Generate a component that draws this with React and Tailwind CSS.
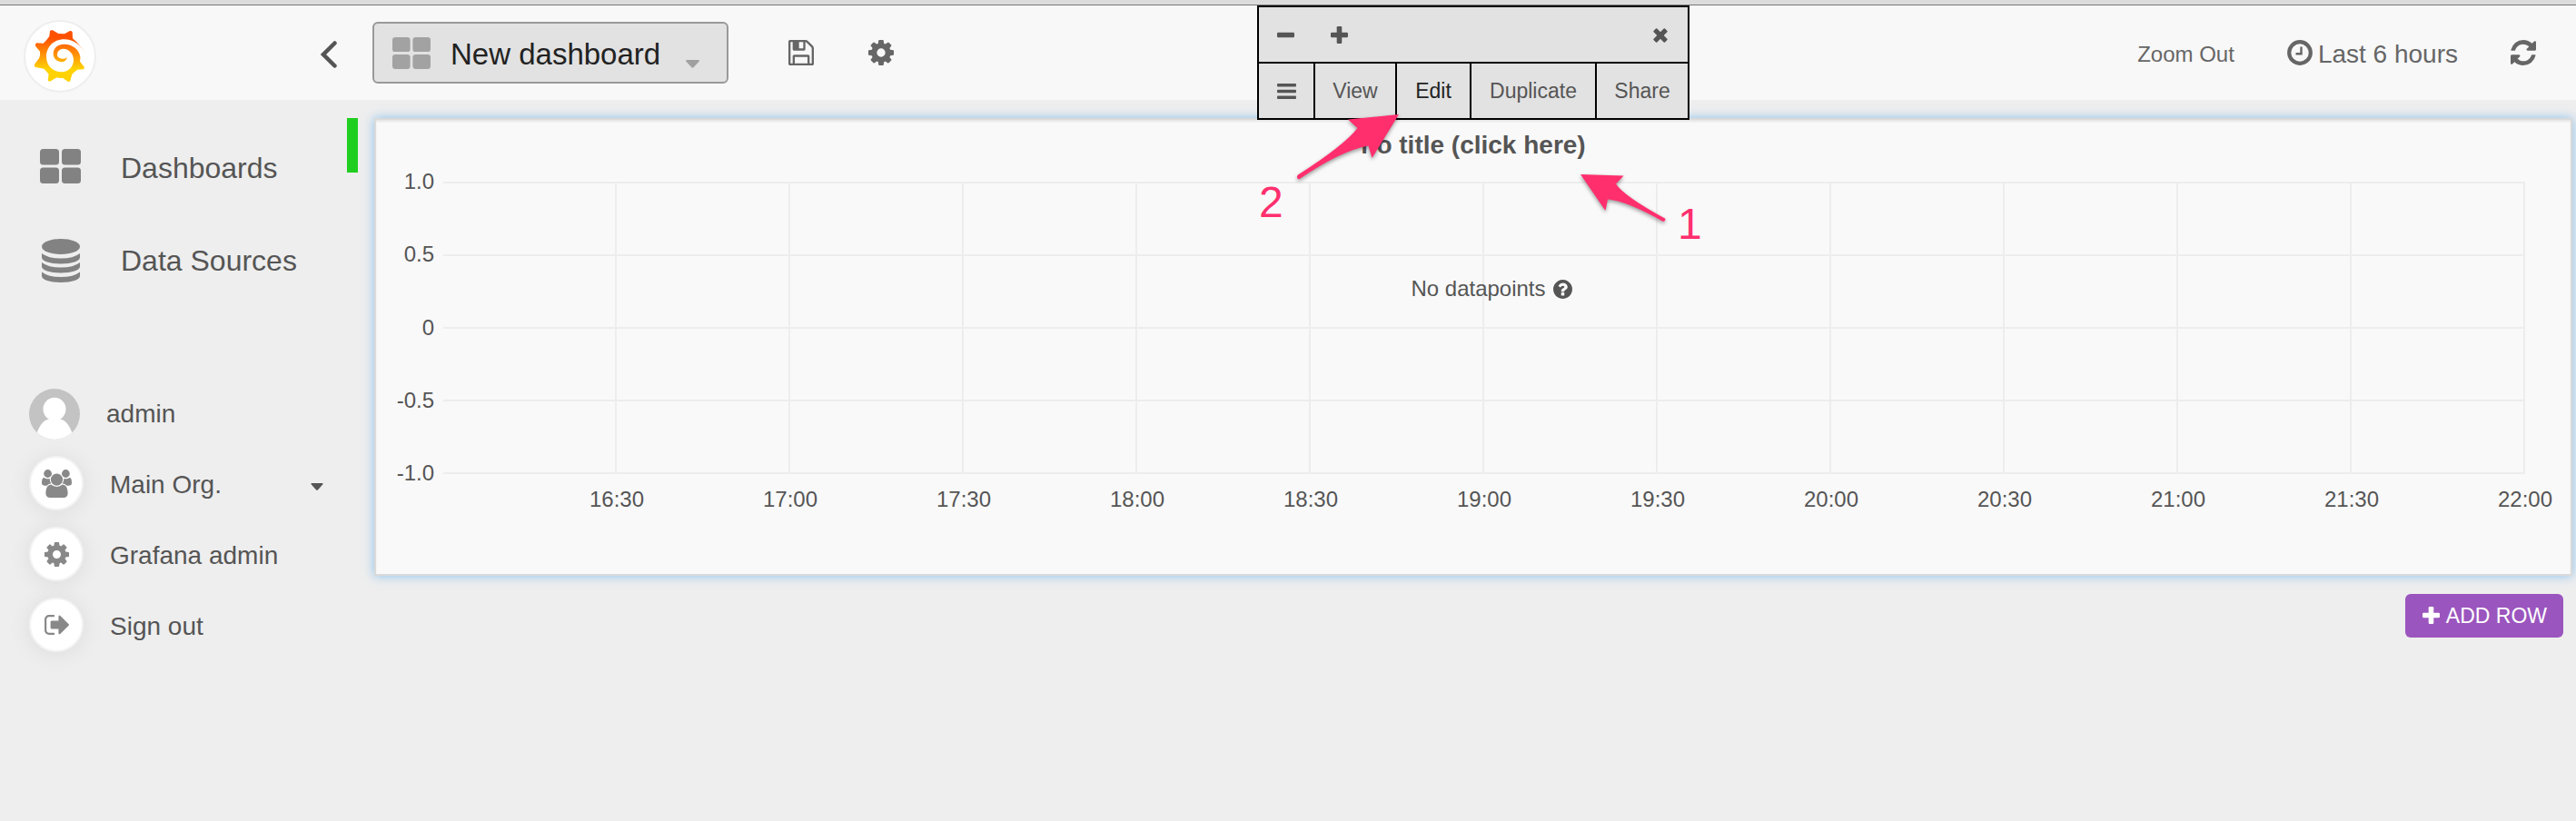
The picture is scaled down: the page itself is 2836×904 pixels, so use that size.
import React from "react";

const hours = ["16:30", "17:00", "17:30", "18:00", "18:30", "19:00", "19:30", "20:00", "20:30", "21:00", "21:30", "22:00"];
const levels = ["1.0", "0.5", "0", "-0.5", "-1.0"];
const cells = Array.from({ length: 48 }, (_, i) => i);

const COG =
  "M1152 896q0-106-75-181t-181-75-181 75-75 181 75 181 181 75 181-75 75-181zm512-109v222q0 12-8 23t-20 13l-185 28q-19 54-39 91 35 50 107 138 10 12 10 25t-9 23q-27 37-99 108t-94 71q-12 0-26-9l-138-108q-44 23-91 38-16 136-29 186-7 28-36 28h-222q-14 0-24.500-8.500t-11.500-21.500l-28-184q-49-16-90-37l-141 107q-10 9-25 9-14 0-25-11-126-114-165-168-7-10-7-23 0-12 8-23 15-21 51-66.500t54-70.500q-27-50-41-99l-183-27q-13-2-21-12.500t-8-23.500v-222q0-12 8-23t19-13l186-28q14-46 39-92-40-57-107-138-10-12-10-24 0-10 9-23 26-36 98.500-107.500t94.500-71.500q13 0 26 10l138 107q44-23 91-38 16-136 29-186 7-28 36-28h222q14 0 24.500 8.500t11.500 21.500l28 184q49 16 90 37l142-107q9-9 24-9 13 0 25 10 129 119 165 170 7 8 7 22 0 12-8 23-15 21-51 66.500t-54 70.500q26 50 41 98l183 28q13 2 21 12.500t8 23.500z";
const SAVE =
  "M384 1536h768v-384H384v384zm896 0h128V640q0-14-10-38.500t-20-34.500l-281-281q-10-10-34-20t-39-10v416q0 40-28 68t-68 28H352q-40 0-68-28t-28-68V256H128v1280h128v-416q0-40 28-68t68-28h832q40 0 68 28t28 68v416zM896 608V288q0-13-9.500-22.500T864 256H672q-13 0-22.500 9.500T640 288v320q0 13 9.500 22.500T672 640h192q13 0 22.500-9.500T896 608zm640 32v928q0 40-28 68t-68 28H96q-40 0-68-28t-28-68V224q0-40 28-68t68-28h928q40 0 88 20t76 48l280 280q28 28 48 76t20 88z";
const REFRESH =
  "M1639 1056q0 5-1 7-64 268-268 434.500t-478 166.500q-146 0-282.500-55t-243.500-157l-129 129q-19 19-45 19t-45-19-19-45v-448q0-26 19-45t45-19h448q26 0 45 19t19 45-19 45l-137 137q71 66 161 102t187 36q134 0 250-65t186-179q11-17 53-117 8-23 30-23h192q13 0 22.500 9.500t9.500 22.500zm25-800v448q0 26-19 45t-45 19h-448q-26 0-45-19t-19-45 19-45l138-138q-148-137-349-137-134 0-250 65t-186 179q-11 17-53 117-8 23-30 23h-199q-13 0-22.500-9.500t-9.500-22.500v-7q65-268 270-434.500t480-166.500q146 0 284 55.500t245 156.500l130-129q19-19 45-19t45 19 19 45z";
const USERS =
  "M593 896q-162 5-265 128h-134q-82 0-138-40.500t-56-118.500q0-353 124-353 6 0 43.500 21t97.500 42.500 119 21.500q67 0 133-23-5 37-5 66 0 139 81 256zm1071 637q0 120-73 189.500t-194 69.500h-874q-121 0-194-69.500t-73-189.500q0-53 3.500-103.500t14-109 26.500-108.500 43-97.500 62-81 85.500-53.500 111.500-20q10 0 43 21.500t73 48 107 48 135 21.500 135-21.500 107-48 73-48 43-21.500q61 0 111.500 20t85.500 53.500 62 81 43 97.500 26.500 108.500 14 109 3.500 103.500zm-1024-1277q0 106-75 181t-181 75-181-75-75-181 75-181 181-75 181 75 75 181zm704 384q0 159-112.500 271.500t-271.500 112.500-271.500-112.500-112.500-271.500 112.500-271.500 271.500-112.500 271.500 112.500 112.500 271.500zm576 225q0 78-56 118.500t-138 40.500h-134q-103-123-265-128 81-117 81-256 0-29-5-66 66 23 133 23 59 0 119-21.500t97.500-42.500 43.500-21q124 0 124 353zm-128-609q0 106-75 181t-181 75-181-75-75-181 75-181 181-75 181 75 75 181z";
const SIGN_OUT =
  "M704 1440q0 4 1 20t.5 26.500-3 23.500-10 19.500-20.500 6.500h-320q-119 0-203.500-84.500t-84.500-203.500v-704q0-119 84.500-203.500t203.500-84.500h320q13 0 22.500 9.500t9.500 22.500q0 4 1 20t.5 26.500-3 23.500-10 19.500-20.500 6.500h-320q-66 0-113 47t-47 113v704q0 66 47 113t113 47h312l11.500 1 11.500 3 8 5.500 7 9 2 13.500zm928-544q0 26-19 45l-544 544q-19 19-45 19t-45-19-19-45v-288h-448q-26 0-45-19t-19-45v-384q0-26 19-45t45-19h448v-288q0-26 19-45t45-19 45 19l544 544q19 19 19 45z";
const QUESTION =
  "M1024 1376v-192q0-14-9-23t-23-9h-192q-14 0-23 9t-9 23v192q0 14 9 23t23 9h192q14 0 23-9t9-23zm256-672q0-88-55.500-163t-138.500-116-170-41q-243 0-371 213-15 24 8 42l132 100q7 6 19 6 16 0 25-12 53-68 86-92 34-24 86-24 48 0 85.500 26t37.500 59q0 38-20 61t-68 45q-63 28-115.500 86.500t-52.500 125.500v36q0 14 9 23t23 9h192q14 0 23-9t9-23q0-19 21.500-49.500t54.500-49.500q32-18 49-28.500t46-35 44.500-48 28-60.500 12.500-81zm384 192q0 209-103 385.500t-279.500 279.500-385.500 103-385.500-103-279.500-279.500-103-385.500 103-385.500 279.500-279.500 385.500-103 385.500 103 279.500 279.500 103 385.500z";

function Glyph({ d, box = "128 128 1536 1536", className }) {
  return (
    <svg viewBox={box} className={className} fill="currentColor" aria-hidden="true">
      <path d={d} />
    </svg>
  );
}

function Plus({ className }) {
  return (
    <svg viewBox="0 0 19 19" className={className} fill="currentColor" aria-hidden="true">
      <rect x="0" y="6.700" width="19" height="5.600" rx="1.200" />
      <rect x="6.700" y="0" width="5.600" height="19" rx="1.200" />
    </svg>
  );
}

function Caret({ className }) {
  return (
    <svg viewBox="0 0 15 9" className={className} fill="currentColor" aria-hidden="true">
      <path d="M1 0H14Q15.500 .5 14.500 1.700L8.500 8.300Q7.500 9 6.500 8.300L.5 1.700Q-.5 .5 1 0Z" />
    </svg>
  );
}

function Logo() {
  return (
    <svg viewBox="110 96 176 180" className="h-15 w-15" aria-hidden="true">
      <defs>
        <linearGradient id="sun" x1="0" y1="100" x2="0" y2="270" gradientUnits="userSpaceOnUse">
          <stop offset="0.150" stopColor="#ff5000" />
          <stop offset="0.500" stopColor="#ff9708" />
          <stop offset="0.750" stopColor="#ffd200" />
        </linearGradient>
      </defs>
      <path
        fill="url(#sun)"
        d="M281 176Q262 145 240 127L239 106Q236 101 231 102L213 112Q203 111 193 111L174 100Q167 98 165 103L163 120Q156 131 143 143L120 142Q116 146 117 152L132 170Q134 185 129 193L114 212Q112 220 117 222L145 227Q154 236 161 245L158 265Q161 271 167 268L188 256Q198 259 207 257L224 269Q230 272 232 266L238 245Q246 236 256 230L275 229Q281 226 278 221L264 203Q266 194 265 184Z"
      />
      <path
        fill="#fff"
        d="M283 178Q255 130 212 130C175 130 153 158 153 187C153 218 175 238 203 238C228 238 243 218 243 198C243 178 228 161 209 161C197 161 189 170 189 180C189 190 198 194 206 194Q216 195 222 190Q218 204 205 205C186 204 176 192 176 178C176 158 192 146 212 146C240 146 262 165 265 187Z"
      />
    </svg>
  );
}

function Tiles({ className }) {
  return (
    <svg viewBox="0 0 45 38" preserveAspectRatio="none" className={className} fill="currentColor" aria-hidden="true">
      <rect width="21" height="17.500" rx="3.500" />
      <rect x="24" width="21" height="17.500" rx="3.500" />
      <rect y="20.500" width="21" height="17.500" rx="3.500" />
      <rect x="24" y="20.500" width="21" height="17.500" rx="3.500" />
    </svg>
  );
}

function Database() {
  return (
    <svg viewBox="0 0 42 48" className="h-12 w-[42px]" fill="currentColor" aria-hidden="true">
      <ellipse cx="21" cy="8.500" rx="21" ry="8.500" />
      <path d="M0 16Q7 21.500 21 21.500T42 16V20.500C42 24.500 33 27.500 21 27.500S0 24.500 0 20.500Z" />
      <path d="M0 26Q7 31.500 21 31.500T42 26V30.500C42 34.500 33 37.500 21 37.500S0 34.500 0 30.500Z" />
      <path d="M0 36.500Q7 42 21 42T42 36.500V41C42 45 33 48 21 48S0 45 0 41Z" />
    </svg>
  );
}

function Avatar() {
  return (
    <svg viewBox="0 0 56 56" className="h-14 w-14" aria-hidden="true">
      <defs>
        <clipPath id="face">
          <circle cx="28" cy="28" r="28" />
        </clipPath>
      </defs>
      <g clipPath="url(#face)">
        <rect width="56" height="56" fill="#c3c3c3" />
        <ellipse cx="28" cy="22.500" rx="12.500" ry="12.800" fill="#fff" />
        <path d="M8 50C12 39 17 34 22 33.500H34C39 34 44 39 48 50V56H8Z" fill="#fff" />
      </g>
    </svg>
  );
}

function Badge({ children }) {
  return (
    <span className="mb-1 flex h-15 w-15 items-center justify-center rounded-full border-2 border-[#f3f3f3] bg-white text-[#888] shadow-[0_2px_24px_rgba(0,0,0,0.08)]">
      {children}
    </span>
  );
}

function Header() {
  return (
    <header className="flex h-[104px] items-center bg-[#f8f8f8] text-[#666]">
      <div className="flex w-[410px] shrink-0 items-center justify-between pr-[39px] pl-[26px]">
        <a href="#home" aria-label="Home" className="mt-2 flex h-20 w-20 items-center justify-center rounded-full border-2 border-[#eee] bg-white">
          <Logo />
        </a>
        <button type="button" aria-label="Collapse menu" className="mt-1 text-[#555]">
          <svg viewBox="0 0 18 30" className="h-[30px] w-[18px]" fill="none" stroke="currentColor" strokeWidth="4.500" strokeLinecap="round" aria-hidden="true">
            <path d="M15.500 2.500L3 15L15.500 27.500" />
          </svg>
        </button>
      </div>
      <button type="button" className="flex h-[68px] shrink-0 items-center rounded-md border-2 border-[#999] bg-[#e2e2e2] pr-[30px] pl-5 text-[33px] leading-10 text-[#222]">
        <Tiles className="h-[35px] w-[42px] text-[#a2a2a2]" />
        <span className="mt-1 ml-[22px] whitespace-nowrap">New dashboard</span>
        <Caret className="mt-6 ml-7 h-[9px] w-[15px] text-[#a0a0a0]" />
      </button>
      <button type="button" aria-label="Save dashboard" className="ml-[66px]">
        <Glyph d={SAVE} box="0 128 1536 1536" className="h-7 w-7" />
      </button>
      <button type="button" aria-label="Dashboard settings" className="ml-15">
        <Glyph d={COG} className="h-7 w-7" />
      </button>
      <div className="ml-auto flex items-center pr-11">
        <button type="button" className="mt-1 text-2xl leading-8">Zoom Out</button>
        <button type="button" className="ml-[58px] flex items-center gap-1.5 text-[28px] leading-8">
          <svg viewBox="0 0 28 28" className="h-7 w-7" fill="none" stroke="currentColor" aria-hidden="true">
            <circle cx="14" cy="14" r="11.800" strokeWidth="4.200" />
            <path d="M15.500 7.500V15.300H9.500" strokeWidth="2.400" />
          </svg>
          <span className="mt-1">Last 6 hours</span>
        </button>
        <button type="button" aria-label="Refresh" className="ml-[58px]">
          <Glyph d={REFRESH} className="h-7 w-7" />
        </button>
      </div>
    </header>
  );
}

function Sidebar() {
  return (
    <nav className="w-[382px] shrink-0 pt-6 text-[28px] leading-9 text-[#555]">
      <ul className="text-[32px]">
        <li>
          <a href="#dashboards" className="flex h-[102px] items-center pl-11">
            <Tiles className="mb-1 h-[38px] w-[45px] text-[#828282]" />
            <span className="ml-11">Dashboards</span>
          </a>
        </li>
        <li>
          <a href="#datasources" className="flex h-[102px] items-center pl-[46px]">
            <span className="text-[#828282]"><Database /></span>
            <span className="ml-[45px]">Data Sources</span>
          </a>
        </li>
      </ul>
      <ul className="mt-[79px]">
        <li>
          <a href="#profile" className="flex h-[78px] items-center gap-[29px] pl-8">
            <Avatar />
            admin
          </a>
        </li>
        <li>
          <button type="button" className="flex h-[78px] w-full items-center gap-[29px] pr-[26px] pl-8">
            <Badge><Glyph d={USERS} box="0 0 1920 1792" className="h-[31px] w-[33px]" /></Badge>
            Main Org.
            <Caret className="mt-1 ml-auto h-2 w-[14px]" />
          </button>
        </li>
        <li>
          <a href="#admin" className="flex h-[78px] items-center gap-[29px] pl-8">
            <Badge><Glyph d={COG} className="h-[27px] w-[27px]" /></Badge>
            Grafana admin
          </a>
        </li>
        <li>
          <a href="#logout" className="flex h-[78px] items-center gap-[29px] pl-8">
            <Badge><Glyph d={SIGN_OUT} box="64 256 1568 1280" className="h-[22px] w-[27px]" /></Badge>
            Sign out
          </a>
        </li>
      </ul>
    </nav>
  );
}

function PanelMenu() {
  return (
    <div className="absolute bottom-full left-1/2 w-[476px] -translate-x-1/2 border-2 border-black bg-[#e2e2e2] text-[23px] leading-8 text-[#555]">
      <div className="flex h-[62px] items-center border-b-2 border-black pr-[21px] pl-5">
        <button type="button" aria-label="Narrower">
          <svg viewBox="0 0 19 19" className="h-[19px] w-[19px]" fill="currentColor" aria-hidden="true">
            <rect y="6.700" width="19" height="5.600" rx="1.200" />
          </svg>
        </button>
        <button type="button" aria-label="Wider" className="ml-10"><Plus className="h-[19px] w-[19px]" /></button>
        <button type="button" aria-label="Close" className="mt-0.5 ml-auto"><Plus className="h-[18px] w-[18px] rotate-45" /></button>
      </div>
      <div className="flex h-[60px] divide-x-2 divide-black">
        <button type="button" aria-label="Panel menu" className="w-[62px] shrink-0 pl-5">
          <svg viewBox="0 0 21 17" className="h-[17px] w-[21px]" fill="currentColor" aria-hidden="true">
            <rect width="21" height="3.400" rx="1" />
            <rect y="6.800" width="21" height="3.400" rx="1" />
            <rect y="13.600" width="21" height="3.400" rx="1" />
          </svg>
        </button>
        <button type="button" className="w-[90px] shrink-0">View</button>
        <button type="button" className="w-[82px] shrink-0 text-[#222]">Edit</button>
        <button type="button" className="w-[138px] shrink-0">Duplicate</button>
        <button type="button" className="flex-1">Share</button>
      </div>
    </div>
  );
}

function Annotations() {
  return (
    <svg viewBox="1382 120 500 150" className="pointer-events-none absolute -top-3 left-1/2 -ml-[240px] h-[150px] w-[500px] overflow-visible" fill="#ff2f6e">
      <g className="drop-shadow-[0_2px_2px_rgba(0,0,0,0.4)]">
        <path d="M1540 126L1484 131.500L1494.500 141Q1480 160 1429 192.500Q1426.500 196 1430 197.500Q1476 166 1506.500 160.500L1510.500 174Z" />
        <path d="M1740 192L1787.500 193.500L1779 202.500Q1788 216 1833 240.500Q1834.500 243.500 1831 244Q1790 221 1770 219.500L1767.500 232Z" />
      </g>
      <g fontFamily="Liberation Sans, Arial, sans-serif" fontSize="48">
        <text x="1386" y="239">2</text>
        <text x="1847" y="263">1</text>
      </g>
    </svg>
  );
}

function Graph() {
  return (
    <div className="mt-6 flex gap-2.5 pr-[50px] text-2xl leading-6 text-[#555]">
      <ul className="-mt-3 flex h-[345px] w-16 shrink-0 flex-col justify-between text-right">
        {levels.map((v) => (
          <li key={v}>{v}</li>
        ))}
      </ul>
      <div className="relative flex-1">
        <div className="grid grid-cols-12 border-b-2 border-[#ededed]">
          {cells.map((c) => (
            <div key={c} className="h-20 border-t-2 border-r-2 border-[#ededed]" />
          ))}
        </div>
        <ul className="mt-4 grid grid-cols-12">
          {hours.map((h) => (
            <li key={h} className="flex justify-end">
              <span className="-mr-8 w-16 text-center">{h}</span>
            </li>
          ))}
        </ul>
        <p className="absolute inset-x-0 top-[106px] flex items-center justify-center gap-2 pl-4">
          No datapoints
          <Glyph d={QUESTION} className="h-[21px] w-[21px]" />
        </p>
      </div>
    </div>
  );
}

export default function App() {
  return (
    <div className="flex min-h-screen flex-col bg-[#eee] font-['Liberation_Sans',Arial,sans-serif]">
      <div className="h-1.5 border-b border-[#777] bg-[#dcdcdc]" />
      <Header />
      <div className="flex flex-1">
        <Sidebar />
        <main className="flex min-w-0 flex-1 pt-5 pr-1">
          <button type="button" aria-label="Row menu" className="h-15 w-3 shrink-0 bg-[#20ce20]" />
          <div className="ml-[18px] flex min-w-0 flex-1 flex-col">
            <section className="relative border-2 border-[#dadada] bg-[#f9f9f9] pt-3 pb-[70px] shadow-[inset_0_2px_2px_rgba(0,0,0,0.075),0_0_11px_rgba(82,168,236,0.65)]">
              <h2 className="text-center text-[28px] leading-8 font-bold text-[#555]">
                <button type="button">no title (click here)</button>
              </h2>
              <Graph />
              <PanelMenu />
              <Annotations />
            </section>
            <button type="button" className="mt-5 mr-2.5 flex h-12 items-center gap-[7px] self-end rounded-md bg-[#9b55be] pr-[18px] pl-[19px] text-[23px] leading-8 text-white">
              <Plus className="mb-0.5 h-[19px] w-[19px]" />
              ADD ROW
            </button>
          </div>
        </main>
      </div>
    </div>
  );
}
